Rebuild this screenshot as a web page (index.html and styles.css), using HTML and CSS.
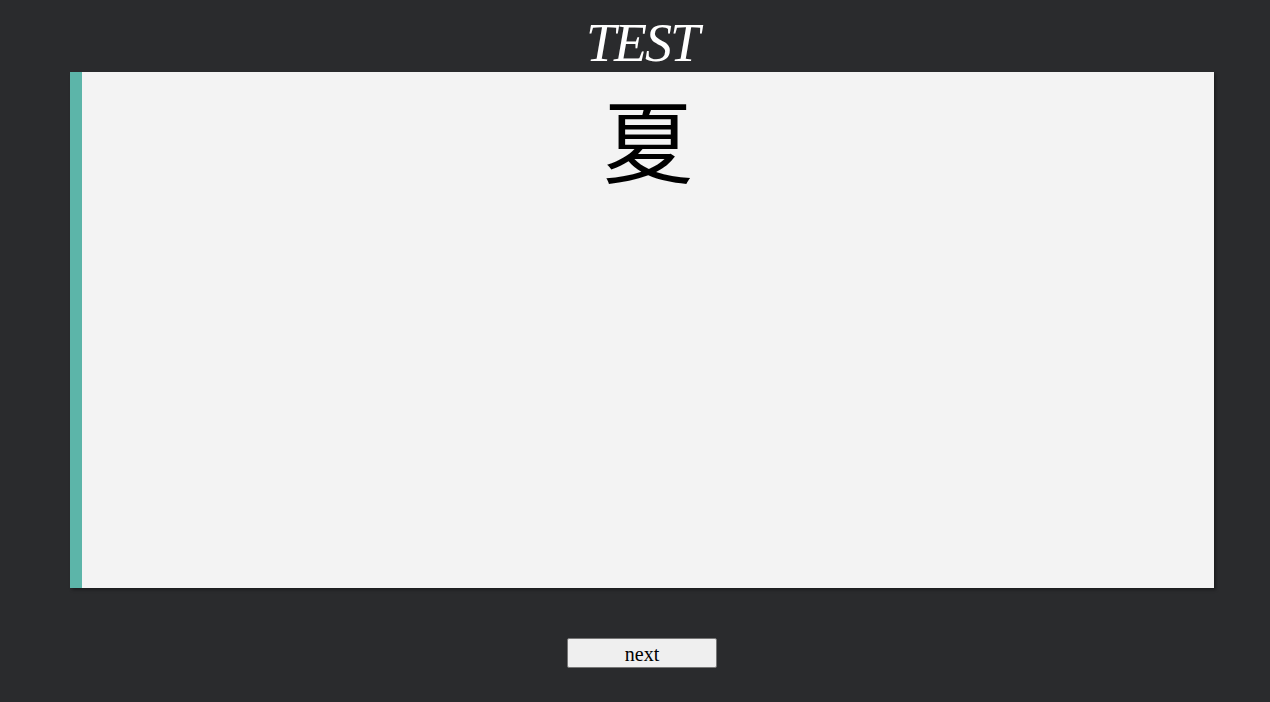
FILE: index.html
```html
<!DOCTYPE html>
<html>
<head>
<meta charset="utf-8">
<link rel="stylesheet" href="styles.css">
</head>
<body>
<div class="page">
  <h1 class="title">TEST</h1>
  <div class="card">
    <div class="word">夏</div>
  </div>
  <div class="actions">
    <button class="next">next</button>
  </div>
</div>
</body>
</html>
```
FILE: styles.css
```css
html, body {
  margin: 0;
  padding: 0;
  background: #2a2b2d;
  height: 100%;
}
.page {
  padding-left: 14px;
  display: flex;
  flex-direction: column;
}
.title {
  margin: 0;
  height: 72px;
  box-sizing: border-box;
  padding-top: 16px;
  text-align: center;
  font-family: "Liberation Serif", "DejaVu Serif", serif;
  font-style: italic;
  font-weight: normal;
  font-size: 54px;
  line-height: 54px;
  letter-spacing: -2px;
  color: #ffffff;
}
.card {
  margin: 0 56px;
  height: 516px;
  box-sizing: border-box;
  background: #f3f3f3;
  border-left: 12px solid #5cb5a9;
  box-shadow: 2px 2px 3px rgba(0, 0, 0, 0.35);
  text-align: center;
}
.word {
  font-family: "Noto Sans CJK JP", "Noto Sans CJK SC", sans-serif;
  font-size: 90px;
  line-height: 1;
  padding-top: 20px;
  color: #000;
}
.actions {
  display: flex;
  justify-content: center;
  padding-top: 50px;
}
.next {
  width: 150px;
  height: 30px;
  background: #efefef;
  border: 1px solid #767676;
  border-radius: 2px;
  font-family: "Liberation Serif", serif;
  font-size: 20px;
  color: #000;
  padding: 2px 0 0;
  line-height: 26px;
}
```
